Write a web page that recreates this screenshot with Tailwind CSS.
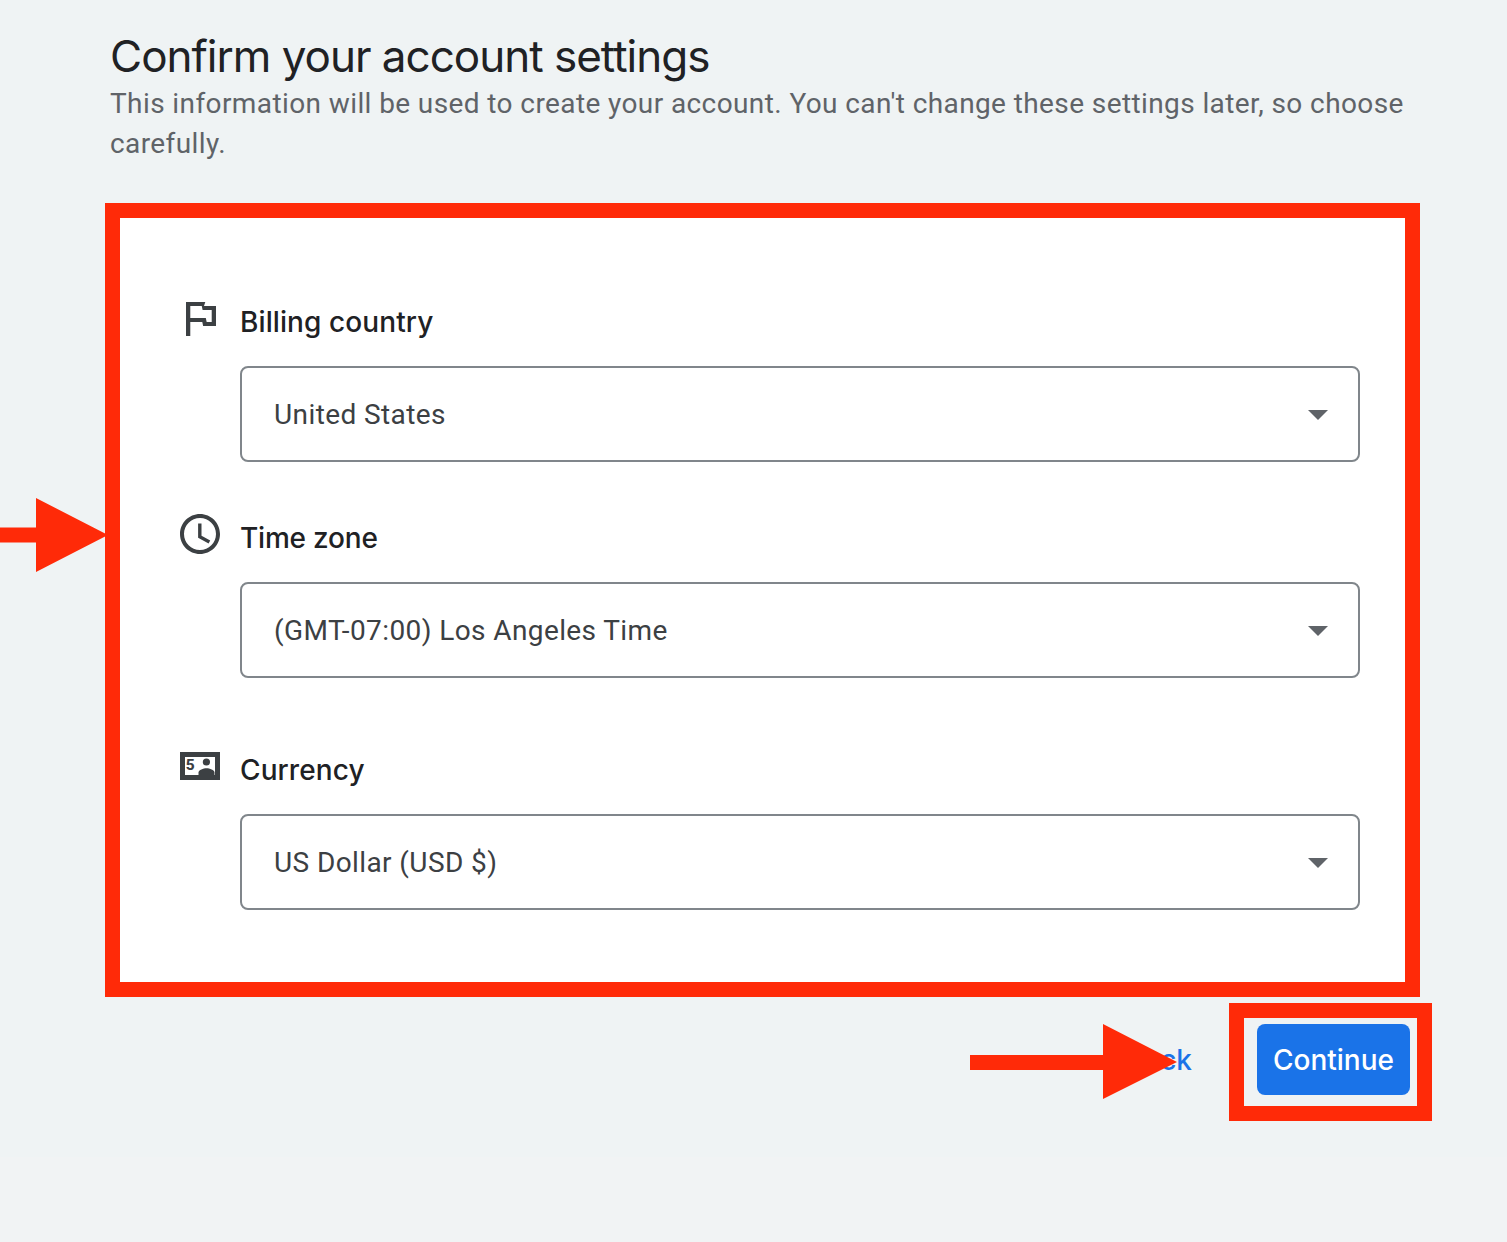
<!DOCTYPE html>
<html lang="en">
<head>
<meta charset="utf-8">
<title>Confirm your account settings</title>
<script src="https://cdn.jsdelivr.net/npm/@tailwindcss/browser@4"></script>
</head>
<body class="relative w-[1507px] h-[1242px] overflow-hidden bg-[#f1f3f4] font-['Roboto',sans-serif]">
<main class="h-[1157px] bg-[#eff3f4] pt-[28px] pl-[105px] pr-[75px]">
  <h1 class="pl-[5px] text-[44px] leading-[56px] text-[#202124] font-['Inter',sans-serif] font-normal tracking-[-1px]">Confirm your account settings</h1>
  <p class="pl-[5px] w-[1315px] text-[28px] leading-[40px] tracking-[0.4px] text-[#5f6368]">This information will be used to create your account. You can't change these settings later, so choose carefully.</p>

  <section class="mt-[39px] w-[1315px] h-[794px] border-[15px] border-[#ff2a08] bg-white pt-[83px] pl-[120px] pr-[45px]">
    <div class="relative h-[40px] pt-[2px] flex items-center text-[28px] font-medium text-[#202124] font-['Inter',sans-serif] tracking-[0.1px]">
      <svg class="absolute left-[-54px] top-[1px] w-[30px] h-[34px]" viewBox="5 4 14 17" preserveAspectRatio="none" fill="#3c4043"><path d="M12.36 6l.4 2H17v6h-2.36l-.4-2H7V6h5.36M14 4H5v17h2v-7h5.6l.4 2h6V6h-5.6L14 4z"/></svg>
      Billing country
    </div>
    <div class="mt-[25px] h-[96px] pt-[2px] flex items-center justify-between rounded-lg border-2 border-[#80868b] pl-[32px] pr-[30px] text-[28px] tracking-[0.4px] text-[#3c4043]">
      United States
      <svg class="w-[20px] h-[10px]" viewBox="0 0 20 10" fill="#5f6368"><path d="M0 0h20L10 10z"/></svg>
    </div>

    <div class="relative mt-[55px] h-[40px] pt-[2px] flex items-center text-[28px] font-medium text-[#202124] font-['Inter',sans-serif] tracking-[-0.2px]">
      <svg class="absolute left-[-60px] top-[-3px] w-[40px] h-[40px]" viewBox="2 2 20 20" fill="#3c4043"><path d="M11.99 2C6.47 2 2 6.48 2 12s4.47 10 9.99 10C17.52 22 22 17.52 22 12S17.52 2 11.99 2zM12 20c-4.42 0-8-3.58-8-8s3.58-8 8-8 8 3.58 8 8-3.58 8-8 8z"/><path fill="none" stroke="#3c4043" stroke-width="1.7" d="M11.9 6.800v6.600l4.800 2.600"/></svg>
      Time zone
    </div>
    <div class="mt-[25px] h-[96px] pt-[2px] flex items-center justify-between rounded-lg border-2 border-[#80868b] pl-[32px] pr-[30px] text-[28px] tracking-[0.4px] text-[#3c4043]">
      (GMT-07:00) Los Angeles Time
      <svg class="w-[20px] h-[10px]" viewBox="0 0 20 10" fill="#5f6368"><path d="M0 0h20L10 10z"/></svg>
    </div>

    <div class="relative mt-[71px] h-[40px] pt-[2px] flex items-center text-[28px] font-medium text-[#202124] font-['Inter',sans-serif] tracking-[0.1px]">
      <svg class="absolute left-[-60px] top-[3px] w-[40px] h-[28px]" viewBox="0 0 40 28"><path fill-rule="evenodd" fill="#3c4043" d="M0 0h40v28H0zM5 5v18h30V5z"/><text x="5.800" y="17.500" font-size="15.500" font-weight="800" font-family="Roboto, sans-serif" fill="#3c4043">5</text><circle cx="26.400" cy="10" r="3.600" fill="#3c4043"/><path fill="#3c4043" d="M18.500 23v-2.500c0-2.600 5-4.300 8-4.300s8 1.700 8 4.300V23z"/></svg>
      Currency
    </div>
    <div class="mt-[25px] h-[96px] pt-[2px] flex items-center justify-between rounded-lg border-2 border-[#80868b] pl-[32px] pr-[30px] text-[28px] tracking-[0.4px] text-[#3c4043]">
      US Dollar (USD $)
      <svg class="w-[20px] h-[10px]" viewBox="0 0 20 10" fill="#5f6368"><path d="M0 0h20L10 10z"/></svg>
    </div>
  </section>

  <div class="mt-[6px] flex items-center justify-end">
    <a class="mr-[37px] mb-[4px] text-[28px] font-medium text-[#1a73e8] font-['Inter',sans-serif]">Back</a>
    <div class="border-[15px] border-[#ff2a08] pt-[6px] pb-[11px] pl-[13px] pr-[7px]">
      <button class="block w-[153px] h-[71px] rounded-lg bg-[#1a73e8] text-[28px] font-medium text-white font-['Inter',sans-serif]">Continue</button>
    </div>
  </div>
</main>
<svg class="absolute left-0 top-[498px] w-[108px] h-[74px]" viewBox="0 0 108 74" fill="#ff2a08"><path d="M0 29.500h36V0l72 37-72 37V44.500H0z"/></svg>
<svg class="absolute left-[970px] top-[1024px] w-[207px] h-[75px]" viewBox="0 0 207 75" fill="#ff2a08"><path d="M0 31h133V0l74 38-74 37V46H0z"/></svg>
</body>
</html>
